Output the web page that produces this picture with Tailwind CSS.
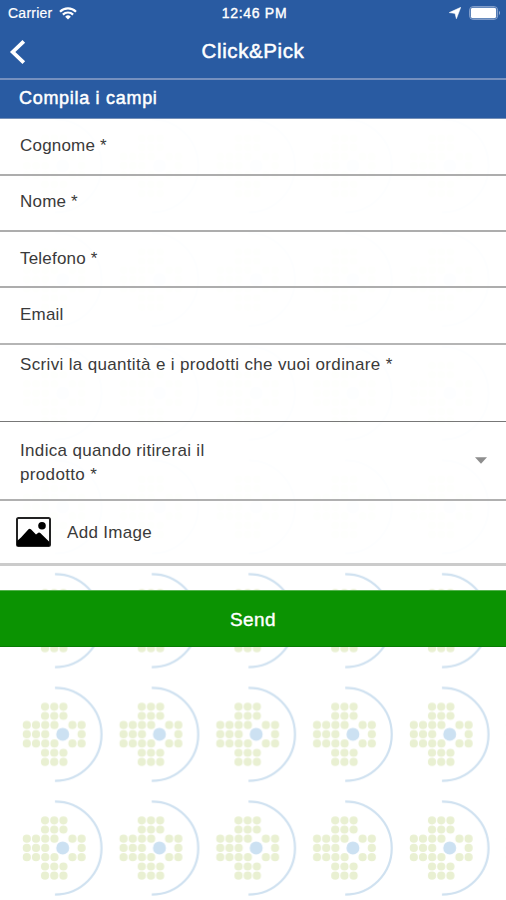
<!DOCTYPE html>
<html lang="it">
<head>
<meta charset="utf-8">
<title>Click&amp;Pick</title>
<script src="https://cdn.jsdelivr.net/npm/@tailwindcss/browser@4"></script>
</head>
<body class="relative w-[506px] h-[900px] overflow-hidden bg-white font-['Liberation_Sans',sans-serif] text-[17px] tracking-[0.34px] text-[#3a3a3a] whitespace-nowrap">
<svg class="absolute inset-0" width="506" height="900" aria-hidden="true">
  <defs>
    <pattern id="tile" patternUnits="userSpaceOnUse" x="14" y="677.5" width="96.75" height="113.7">
      <path d="M41 10.4A46.5 46.5 0 0 1 41 103.4" fill="none" stroke="#cfe1f0" stroke-width="2.2"/>
      <g fill="none" stroke="#e9f0d2" stroke-width="8.2" stroke-linecap="round" stroke-dasharray="0 9.2">
        <path d="M31 29.2h18.5M31 38.4h18.5M12.8 47.6h27.7M58.4 47.6h9.3M12.8 56.8h18.5M67.6 56.8h.1M12.8 66h27.7M58.4 66h9.3M31 75.3h18.5M31 84.5h18.5"/>
      </g>
      <circle cx="48.7" cy="56.8" r="6.5" fill="#cce1f2"/>
    </pattern>
  </defs>
  <rect x="14" width="492" height="900" fill="url(#tile)"/>
</svg>
<main class="relative flex flex-col">
  <header class="h-[78px] bg-[#295ba2] text-white flex flex-col">
    <div class="h-[26px] grid grid-cols-3 items-center pl-2 pr-[5px] text-[14px] tracking-[0.25px] [-webkit-text-stroke:0.2px_white]">
      <div class="flex items-center gap-[6px]">
        <span>Carrier</span>
        <svg width="18" height="13" viewBox="0 0 18 13" fill="none" stroke="#fff" stroke-width="2.2"><path d="M1 4.7a11.4 11.4 0 0 1 16 0M3.9 7.6a7.2 7.2 0 0 1 10.2 0"/><path d="M9 12.4 6.2 9.7a4 4 0 0 1 5.6 0z" fill="#fff" stroke="none"/></svg>
      </div>
      <div class="text-center [-webkit-text-stroke:0.4px_white] tracking-[0.7px]">12:46 PM</div>
      <div class="flex items-center justify-end gap-2">
        <svg width="12" height="12" viewBox="0 0 12 12" fill="#fff"><path d="M11.8.3 7.4 11.8 6 6.4.2 5.6z" stroke="#fff" stroke-width=".5"/></svg>
        <svg width="32" height="14" viewBox="0 0 32 14"><rect x=".6" y=".6" width="28" height="12.8" rx="3.5" fill="none" stroke="#8aa5cf" stroke-width="1"/><rect x="1.8" y="1.8" width="25.4" height="10.4" rx="2" fill="#fff"/><path d="M30 4.8q2 2.2 0 4.4z" fill="#9fb5d7"/></svg>
      </div>
    </div>
    <div class="h-[51px] grid grid-cols-[60px_1fr_60px] items-center">
      <svg class="ml-[9px]" width="18" height="26" viewBox="0 0 18 26" fill="none" stroke="#fff" stroke-width="3.8"><path d="M14.8 2.3 3.7 13l11.1 10.7"/></svg>
      <h1 class="text-center text-[20.5px] tracking-[0.6px] [-webkit-text-stroke:0.5px_white]">Click&amp;Pick</h1>
    </div>
  </header>
  <h2 class="h-[41px] border-t-2 border-t-[#7590bf] border-b border-b-[#7590b8] bg-[#295ba2] pl-[19px] text-[18px] leading-[37px] tracking-[0.7px] text-white [-webkit-text-stroke:0.5px_white]">Compila i campi</h2>
  <form class="flex flex-col bg-white/95">
    <label class="h-[57px] border-b-2 border-[#adadad] pl-5 leading-[53px] tracking-[0.2px]">Cognome *</label>
    <label class="h-[56px] border-b-2 border-[#adadad] pl-5 leading-[52px] tracking-[0.2px]">Nome *</label>
    <label class="h-[56px] border-b-2 border-[#adadad] pl-5 leading-[53px] tracking-[0.2px]">Telefono *</label>
    <label class="h-[57px] border-b-2 border-[#b5b5b5] pl-5 leading-[53px] tracking-[0.2px]">Email</label>
    <label class="h-[77px] border-b-[1.5px] border-[#777] pl-5 pt-[8px] leading-[23px]">Scrivi la quantità e i prodotti che vuoi ordinare *</label>
    <label class="h-[79px] border-b-2 border-[#b0b0b0] pl-5 pr-[19px] flex items-center justify-between leading-6"><span class="pt-[5px]">Indica quando ritirerai il<br>prodotto *</span>
      <svg width="12" height="7" viewBox="0 0 12 7" fill="#8e8e8e"><path d="M0 .3h12L6 6.7z"/></svg>
    </label>
    <label class="h-[65px] border-b-3 border-[#cbcbcb] pl-4 flex items-center gap-4">
      <svg width="35" height="30" viewBox="0 0 35 30"><rect x="1" y="1" width="33" height="28" rx="1.5" fill="#fff" stroke="#222" stroke-width="2"/><path d="M1 24 5 20.5 12.5 12.3q1.2-1.2 2.4 0L20 17.5l2.3-1.7q1-.6 2 .3L33.5 25V29H1z"/><circle cx="26" cy="8.8" r="3.8"/></svg>
      <span class="pt-[2px] tracking-[0.3px]">Add Image</span>
    </label>
  </form>
  <button class="mt-[24px] pt-[3px] h-[57px] border-t border-t-[#54b24e] border-b border-b-[#087c04] bg-[#0b9302] text-[19px] tracking-[0.4px] text-white [-webkit-text-stroke:0.4px_white]">Send</button>
</main>
</body>
</html>
